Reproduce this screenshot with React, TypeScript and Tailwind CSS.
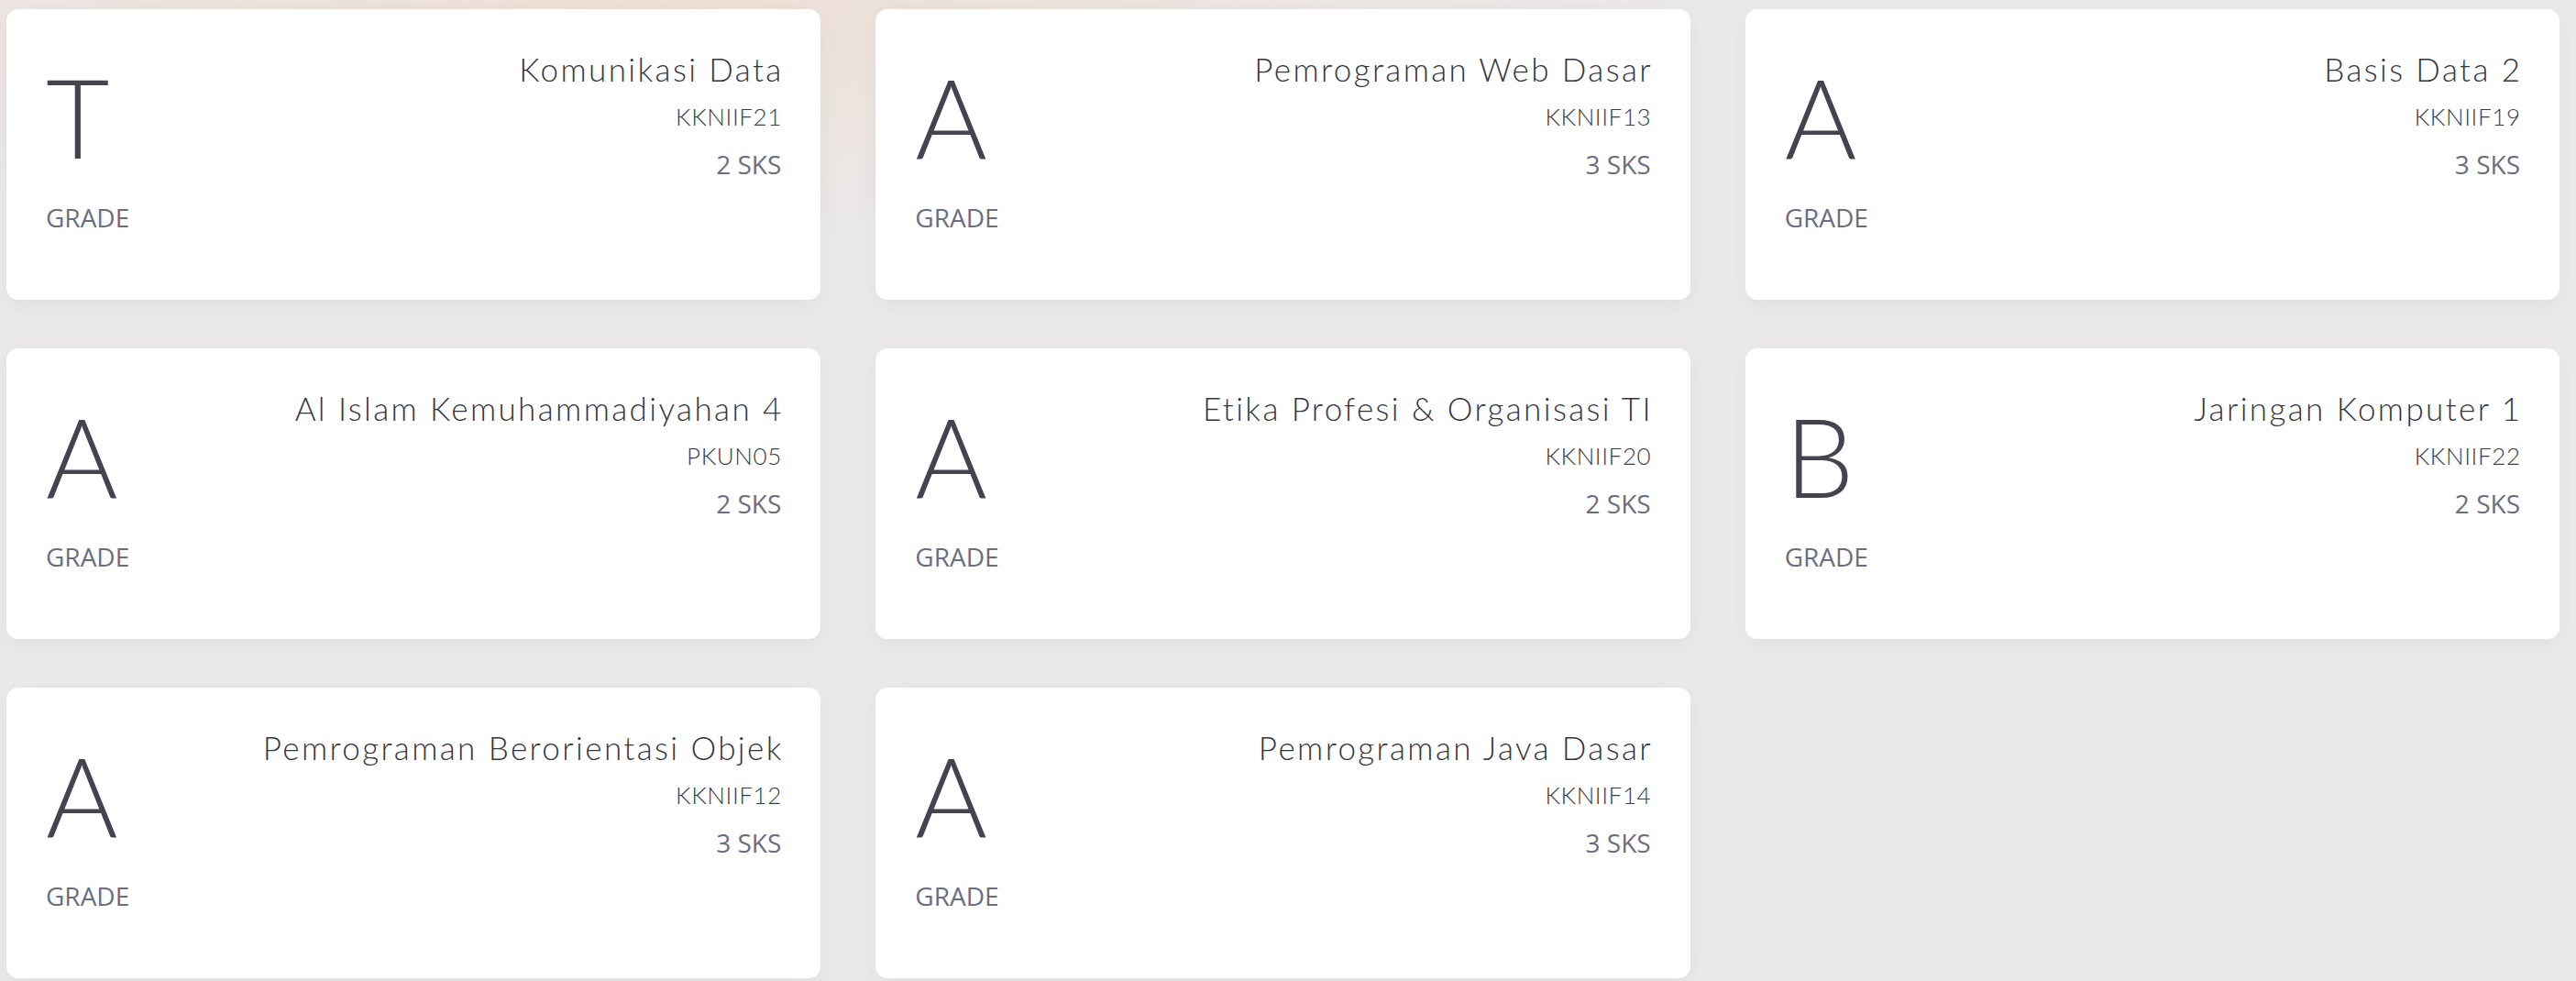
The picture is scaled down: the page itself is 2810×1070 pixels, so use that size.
const courses = [
  { grade: "T", name: "Komunikasi Data", code: "KKNIIF21", sks: 2 },
  { grade: "A", name: "Pemrograman Web Dasar", code: "KKNIIF13", sks: 3 },
  { grade: "A", name: "Basis Data 2", code: "KKNIIF19", sks: 3 },
  { grade: "A", name: "Al Islam Kemuhammadiyahan 4", code: "PKUN05", sks: 2 },
  { grade: "A", name: "Etika Profesi & Organisasi TI", code: "KKNIIF20", sks: 2 },
  { grade: "B", name: "Jaringan Komputer 1", code: "KKNIIF22", sks: 2 },
  { grade: "A", name: "Pemrograman Berorientasi Objek", code: "KKNIIF12", sks: 3 },
  { grade: "A", name: "Pemrograman Java Dasar", code: "KKNIIF14", sks: 3 },
];

export default function App() {
  return (
    <div className="min-h-screen bg-[#ebe9ea] bg-[radial-gradient(ellipse_40%_25%_at_25%_0%,#eee0d6_0%,#ebe9ea_100%)] pl-[7px] pr-[18px] pt-[10px]">
      {/* Grades grid */}
      <div className="grid grid-cols-3 gap-x-[60px] gap-y-[53px]">
        {courses.map((c) => (
          <article
            key={c.code}
            className="flex h-[317px] justify-between rounded-[13px] bg-white p-[43px] shadow-[0_6px_24px_rgba(60,50,50,0.06)]"
          >
            {/* Grade */}
            <div className="flex flex-col">
              <div className="text-[120px] font-light leading-[148px] text-[#434450] [font-family:Lato,sans-serif]">
                {c.grade}
              </div>
              <div className="mt-[16px] text-[28px] leading-[40px] text-[#6a6e80] [font-family:'Open_Sans',sans-serif]">
                GRADE
              </div>
            </div>

            {/* Course info */}
            <div className="flex flex-col items-end text-right">
              <h3 className="mr-[-2.4px] text-[35px] font-light leading-[44px] tracking-[2.4px] text-[#34363f] [font-family:Lato,sans-serif]">
                {c.name}
              </h3>
              <p className="mr-[-0.6px] mt-[10px] text-[26px] font-light leading-[40px] tracking-[0.6px] text-[#3a3c48] [font-family:Lato,sans-serif]">
                {c.code}
              </p>
              <p className="mt-[12px] text-[28px] leading-[40px] text-[#6a6e80] [font-family:'Open_Sans',sans-serif]">
                {c.sks} SKS
              </p>
            </div>
          </article>
        ))}
      </div>
    </div>
  );
}
